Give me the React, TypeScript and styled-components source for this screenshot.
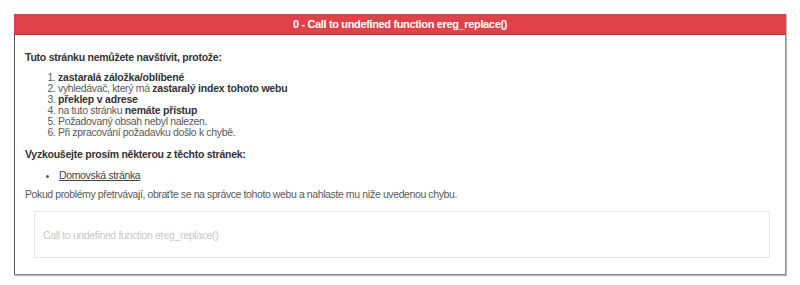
import React from "react";
import styled, { createGlobalStyle } from "styled-components";

const Global = createGlobalStyle`
  html, body { margin: 0; padding: 0; background: #fff; }
  body { font-family: "Liberation Sans", Arial, sans-serif; }
`;

const Page = styled.div`
  padding: 14px 14px 10px 14px;
`;

const Panel = styled.div`
  border: 1px solid #8a8a8a;
  border-left-color: #555;
  border-top: none;
  box-shadow: 1px 1px 1px #bbb;
  background: #fff;
`;

const Header = styled.div`
  background: #e0424a;
  color: #fff;
  font-weight: bold;
  font-size: 11px;
  letter-spacing: -0.35px;
  height: 20px;
  line-height: 20px;
  text-align: center;
  border-bottom: 1px solid #b8353b;
  margin: 0 -1px;
`;

const Body = styled.div`
  padding: 16px 10px 16px 10px;
  font-size: 10.5px;
  letter-spacing: -0.35px;
  color: #5a5a5a;
`;

const Heading = styled.p`
  margin: 0;
  font-weight: bold;
  color: #333;
  line-height: 13px;
  letter-spacing: -0.25px;
`;

const Reasons = styled.ol`
  margin: 8px 0 10px 0;
  padding-left: 33px;
  line-height: 11px;
`;

const Strong = styled.b`
  color: #333;
  letter-spacing: -0.2px;
`;

const Links = styled.ul`
  margin: 8px 0 6px 0;
  padding-left: 34px;
  line-height: 13px;
`;

const Link = styled.a`
  color: #444;
  text-decoration: underline;
`;

const Note = styled.p`
  margin: 0 0 10px 0;
  line-height: 13px;
  letter-spacing: -0.4px;
`;

const ErrorBox = styled.div`
  margin: 0 5px 0 9px;
  border: 1px solid #e6e6e6;
  height: 45px;
  padding: 0 8px;
  display: flex;
  align-items: center;
  color: #c8c8c8;
  font-size: 10.5px;
`;

export default function App() {
  return (
    <Page>
      <Global />
      <Panel>
        <Header>0 - Call to undefined function ereg_replace()</Header>
        <Body>
          <Heading>Tuto stránku nemůžete navštívit, protože:</Heading>
          <Reasons>
            <li><Strong>zastaralá záložka/oblíbené</Strong></li>
            <li>vyhledávač, který má <Strong>zastaralý index tohoto webu</Strong></li>
            <li><Strong>překlep v adrese</Strong></li>
            <li>na tuto stránku <Strong>nemáte přístup</Strong></li>
            <li>Požadovaný obsah nebyl nalezen.</li>
            <li>Při zpracování požadavku došlo k chybě.</li>
          </Reasons>
          <Heading>Vyzkoušejte prosím některou z těchto stránek:</Heading>
          <Links>
            <li><Link href="#">Domovská stránka</Link></li>
          </Links>
          <Note>Pokud problémy přetrvávají, obraťte se na správce tohoto webu a nahlaste mu níže uvedenou chybu.</Note>
          <ErrorBox>Call to undefined function ereg_replace()</ErrorBox>
        </Body>
      </Panel>
    </Page>
  );
}
